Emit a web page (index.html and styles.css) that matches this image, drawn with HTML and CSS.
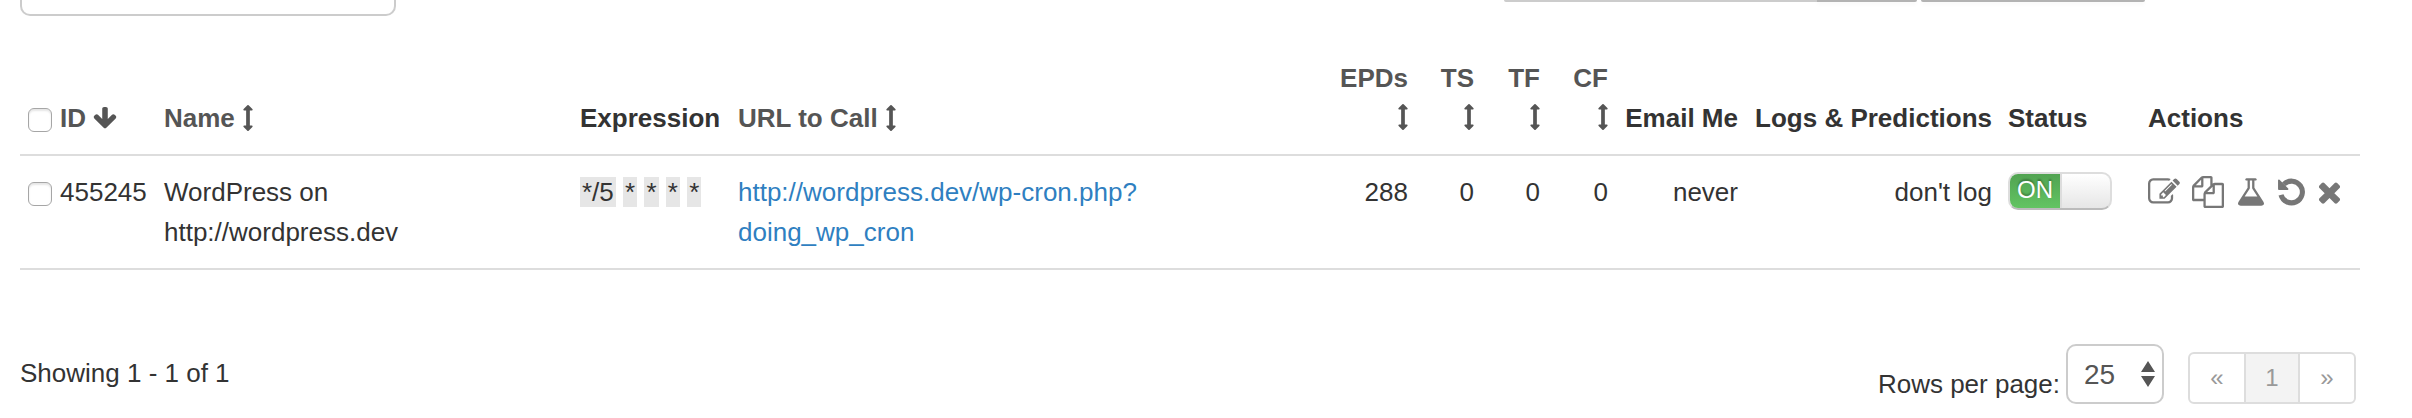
FILE: index.html
```html
<!DOCTYPE html>
<html lang="en">
<head>
    <meta charset="UTF-8">
    <meta name="viewport" content="width=device-width, initial-scale=1.0">
    <title>Cron jobs</title>
    <link rel="stylesheet" href="styles.css">
</head>
<body>
    <!-- icon sprite -->
    <svg class="sprite" aria-hidden="true">
        <symbol id="i-down" viewBox="64 0 1664 1792"><path d="M1675 832q0 53-37 90l-651 652q-39 37-91 37-53 0-90-37l-651-652q-38-36-38-90 0-53 38-91l74-75q39-37 91-37 53 0 90 37l294 294v-704q0-52 38-90t90-38h128q52 0 90 38t38 90v704l294-294q37-37 90-37 52 0 91 37l75 75q37 39 37 91z"/></symbol>
        <symbol id="i-sort" viewBox="576 0 640 1792"><path d="M1216 320q0 26-19 45t-45 19h-128v1024h128q26 0 45 19t19 45-19 45l-256 256q-19 19-45 19t-45-19l-256-256q-19-19-19-45t19-45 45-19h128v-1024h-128q-26 0-45-19t-19-45 19-45l256-256q19-19 45-19t45 19l256 256q19 19 19 45z"/></symbol>
        <symbol id="i-edit" viewBox="0 0 1792 1792"><path d="M888 1184l116-116-152-152-116 116v56h96v96h56zm440-720q-16-16-33 1l-350 350q-17 17-1 33t33-1l350-350q17-17 1-33zm80 594v190q0 119-84.500 203.500t-203.500 84.500h-832q-119 0-203.500-84.500t-84.500-203.500v-832q0-119 84.500-203.500t203.500-84.500h832q63 0 117 25 15 7 18 23 3 17-9 29l-49 49q-14 14-32 8-23-6-45-6h-832q-66 0-113 47t-47 113v832q0 66 47 113t113 47h832q66 0 113-47t47-113v-126q0-13 9-22l64-64q15-15 35-7t20 29zm-96-738l288 288-672 672h-288v-288zm444 132l-92 92-288-288 92-92q28-28 68-28t68 28l152 152q28 28 28 68t-28 68z"/></symbol>
        <symbol id="i-copy" viewBox="0 0 1792 1792"><path d="M1696 384q40 0 68 28t28 68v1216q0 40-28 68t-68 28h-960q-40 0-68-28t-28-68v-288h-544q-40 0-68-28t-28-68v-672q0-40 20-88t48-76l408-408q28-28 76-48t88-20h416q40 0 68 28t28 68v328q68-40 128-40h416zm-544 213l-299 299h299v-299zm-640-384l-299 299h299v-299zm196 647l316-316v-416h-384v416q0 40-28 68t-68 28h-416v640h512v-256q0-40 20-88t48-76zm956 804v-1152h-384v416q0 40-28 68t-68 28h-416v640h896z"/></symbol>
        <symbol id="i-flask" viewBox="64 0 1664 1792"><path d="M1591 1448q56 89 21.500 152.500t-140.500 63.500h-1152q-106 0-140.500-63.500t21.500-152.500l503-793v-399h-64q-26 0-45-19t-19-45 19-45 45-19h512q26 0 45 19t19 45-19 45-45 19h-64v399zm-779-725l-272 429h712l-272-429-20-31v-436h-128v436z"/></symbol>
        <symbol id="i-undo" viewBox="128 0 1536 1792"><path d="M459 459A618 618 0 1 1 299 1056" fill="none" stroke="currentColor" stroke-width="290"/><path d="M180 240v492h492z" stroke="currentColor" stroke-width="100" stroke-linejoin="round"/></symbol>
        <symbol id="i-times" viewBox="192 0 1408 1792"><path d="M1490 1322q0 40-28 68l-136 136q-28 28-68 28t-68-28l-294-294-294 294q-28 28-68 28t-68-28l-136-136q-28-28-28-68t28-68l294-294-294-294q-28-28-28-68t28-68l136-136q28-28 68-28t68 28l294 294 294-294q28-28 68-28t68 28l136 136q28 28 28 68t-28 68l-294 294 294 294q28 28 28 68z"/></symbol>
    </svg>

    <div class="container">
        <div class="toolbar">
            <select class="bulk-action" aria-label="Bulk action"></select>
            <form class="search">
                <input type="text" class="search-input" aria-label="Search">
                <button type="button" class="search-btn" aria-label="Search"></button>
                <button type="button" class="create-btn" aria-label="Create"></button>
            </form>
        </div>

        <table class="jobs">
            <colgroup>
                <col class="col-check">
                <col class="col-id">
                <col class="col-name">
                <col class="col-expression">
                <col class="col-url">
                <col class="col-epds">
                <col class="col-count">
                <col class="col-count">
                <col class="col-cf">
                <col class="col-email">
                <col class="col-logs">
                <col class="col-status">
                <col class="col-actions">
            </colgroup>
            <thead>
                <tr>
                    <th><input type="checkbox" class="check" aria-label="Select all"></th>
                    <th><a href="#">ID <svg class="icon icon-down"><use href="#i-down"/></svg></a></th>
                    <th><a href="#">Name <svg class="icon icon-sort"><use href="#i-sort"/></svg></a></th>
                    <th>Expression</th>
                    <th><a href="#">URL to Call <svg class="icon icon-sort"><use href="#i-sort"/></svg></a></th>
                    <th class="num"><a href="#">EPDs <svg class="icon icon-sort"><use href="#i-sort"/></svg></a></th>
                    <th class="num"><a href="#">TS <svg class="icon icon-sort"><use href="#i-sort"/></svg></a></th>
                    <th class="num"><a href="#">TF <svg class="icon icon-sort"><use href="#i-sort"/></svg></a></th>
                    <th class="num"><a href="#">CF <svg class="icon icon-sort"><use href="#i-sort"/></svg></a></th>
                    <th class="num">Email Me</th>
                    <th class="num">Logs &amp; Predictions</th>
                    <th>Status</th>
                    <th>Actions</th>
                </tr>
            </thead>
            <tbody>
                <tr>
                    <td><input type="checkbox" class="check" aria-label="Select 455245"></td>
                    <td>455245</td>
                    <td>WordPress on http://wordpress.dev</td>
                    <td><span class="cron">*/5</span> <span class="cron">*</span> <span class="cron">*</span> <span class="cron">*</span> <span class="cron">*</span></td>
                    <td><a class="url" href="#">http://wordpress.dev/wp-cron.php?doing_wp_cron</a></td>
                    <td class="num">288</td>
                    <td class="num">0</td>
                    <td class="num">0</td>
                    <td class="num">0</td>
                    <td class="num">never</td>
                    <td class="num">don't log</td>
                    <td><button type="button" class="switch" role="switch" aria-checked="true"><span class="switch-on">ON</span></button></td>
                    <td>
                        <div class="actions">
                            <a href="#" aria-label="Edit"><svg class="icon-lg"><use href="#i-edit"/></svg></a>
                            <a href="#" aria-label="Copy"><svg class="icon-lg"><use href="#i-copy"/></svg></a>
                            <a href="#" aria-label="Test"><svg class="icon-lg icon-flask"><use href="#i-flask"/></svg></a>
                            <a href="#" aria-label="History"><svg class="icon-lg icon-undo"><use href="#i-undo"/></svg></a>
                            <a href="#" aria-label="Delete"><svg class="icon-lg icon-times"><use href="#i-times"/></svg></a>
                        </div>
                    </td>
                </tr>
            </tbody>
        </table>

        <div class="footer">
            <div class="summary">Showing 1 - 1 of 1</div>
            <div class="paging">
                <label for="rows">Rows per page:</label>
                <div class="rows-box">
                    <select id="rows" class="rows">
                        <option>25</option>
                    </select>
                    <svg class="rows-arrows" viewBox="0 0 14 26" aria-hidden="true"><path d="M7 0l7 11H0zM0 15h14L7 26z"/></svg>
                </div>
                <nav class="pagination" aria-label="Pages">
                    <a href="#">«</a>
                    <a href="#" class="active">1</a>
                    <a href="#">»</a>
                </nav>
            </div>
        </div>
    </div>
</body>
</html>
```

FILE: styles.css
```css
* {
    box-sizing: border-box;
}
body {
    margin: 0;
    background: #fff;
    color: #333;
    font-family: "Liberation Sans", Arial, sans-serif;
    font-size: 26px;
    line-height: 40px;
}
a {
    color: inherit;
    text-decoration: none;
}
.sprite {
    display: none;
}
.container {
    padding: 0 52px 0 20px;
}

.toolbar {
    display: flex;
    justify-content: space-between;
    align-items: flex-start;
    height: 42px;
}
.bulk-action {
    appearance: none;
    width: 376px;
    height: 16px;
    border: 2px solid #ccc;
    border-top: 0;
    border-radius: 0 0 10px 10px;
    background: #fff;
}
.search {
    display: flex;
    margin-right: 215px;
}
.search-input,
.search-btn,
.create-btn {
    height: 2px;
    padding: 0;
    border: 0;
    background: #b3b3b3;
    box-shadow: 0 2px 4px rgba(0, 0, 0, 0.05);
}
.search-input {
    width: 313px;
    background: #ccc;
    border-radius: 0 0 0 2px;
    box-shadow: none;
}
.search-btn {
    width: 100px;
    border-radius: 0 0 2px 0;
}
.create-btn {
    width: 224px;
    margin-left: 4px;
    border-radius: 0 0 2px 2px;
}

/* job table */
.jobs {
    width: 100%;
    table-layout: fixed;
    border-collapse: separate;
    border-spacing: 0;
}
.col-check { width: 32px; }
.col-id { width: 104px; }
.col-name { width: 416px; }
.col-expression { width: 158px; }
.col-epds { width: 104px; }
.col-count { width: 66px; }
.col-cf { width: 68px; }
.col-email { width: 130px; }
.col-logs { width: 254px; }
.col-status { width: 140px; }
.col-actions { width: 220px; }
th,
td {
    padding: 16px 8px;
    border-bottom: 2px solid #ddd;
    text-align: left;
    vertical-align: top;
}
th {
    vertical-align: bottom;
    white-space: nowrap;
}
th a {
    color: #555;
}
.num {
    text-align: right;
}
.icon {
    height: 26px;
    fill: currentColor;
    vertical-align: -4px;
}
.icon-down {
    width: 24px;
}
.icon-sort {
    width: 10px;
    margin-left: 1px;
}
/* narrow columns carry the sort arrow on a second line */
.num .icon {
    display: block;
    margin: 6px 0 8px auto;
}
.check {
    appearance: none;
    display: block;
    width: 24px;
    height: 24px;
    margin: 10px 0 6px;
    border: 1px solid #a6a6a6;
    border-radius: 6px;
    background: #fff;
    box-shadow: inset 0 2px 2px rgba(0, 0, 0, 0.1);
}
.cron {
    padding: 0 2px;
    background: #e6e6e6;
}
.url {
    color: #2f7fc1;
}
.switch {
    display: flex;
    width: 104px;
    height: 38px;
    padding: 0;
    border: 2px solid #ddd;
    border-bottom-color: #bbb;
    border-radius: 10px;
    background: linear-gradient(#fff, #e6e6e6);
    overflow: hidden;
    font: inherit;
}
.switch-on {
    width: 52px;
    height: 34px;
    border-right: 2px solid #ddd;
    background: linear-gradient(#51a351, #62c462);
    color: #fff;
    font-size: 24px;
    line-height: 32px;
    text-align: center;
    text-shadow: 0 -2px 2px rgba(0, 0, 0, 0.3);
}
.actions {
    display: flex;
    gap: 12px;
    padding-top: 4px;
    color: #777;
}
.actions a {
    display: flex;
}
.icon-lg {
    width: 32px;
    height: 32px;
    fill: currentColor;
}
.icon-flask { width: 30px; }
.icon-undo { width: 27px; }
.icon-times { width: 25px; }

/* footer */
.footer {
    display: flex;
    justify-content: space-between;
    align-items: flex-start;
    padding: 74px 4px 0 0;
}
.summary {
    padding-top: 9px;
}
.paging {
    display: flex;
    align-items: flex-end;
}
.rows-box {
    display: grid;
    align-items: center;
    margin: 0 24px 0 6px;
}
.rows {
    grid-area: 1 / 1;
    appearance: none;
    width: 98px;
    height: 60px;
    padding: 0 16px;
    border: 2px solid #ccc;
    border-radius: 10px;
    background: #fff;
    color: #555;
    font-family: inherit;
    font-size: 28px;
}
.rows-arrows {
    grid-area: 1 / 1;
    justify-self: end;
    width: 14px;
    height: 26px;
    margin-right: 9px;
    fill: #555;
    pointer-events: none;
}
.pagination {
    display: flex;
    border: 2px solid #ddd;
    border-radius: 6px;
    overflow: hidden;
    color: #999;
    font-size: 24px;
    line-height: 48px;
    text-align: center;
}
.pagination a {
    width: 54px;
}
.pagination .active {
    width: 56px;
    border: solid #ddd;
    border-width: 0 2px;
    background: #f3f3f3;
}
```
